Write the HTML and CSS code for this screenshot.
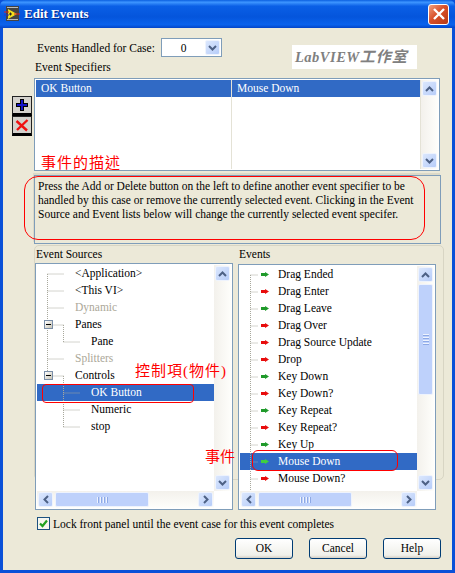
FILE: index.html
```html
<!DOCTYPE html>
<html lang="en">
<head>
  <meta charset="UTF-8">
  <title>Edit Events</title>
  <link rel="stylesheet" href="styles.css">
</head>
<body>
  <div class="window">
    <!-- title bar -->
    <div class="titlebar">
      <svg class="app-icon" width="16" height="16" viewBox="0 0 16 16">
        <rect x="2" y="0" width="13" height="15" fill="#444"/>
        <rect x="3" y="1" width="11" height="1" fill="#bbb" stroke="none"/>
        <rect x="3" y="13" width="11" height="1" fill="#bbb"/>
        <path d="M4 3 L13 8 L4 13 Z" fill="#f2e01c"/>
        <path d="M0 6 H5 M10 8 H16" stroke="#e02020"/>
        <path d="M0 9 H5" stroke="#2030d0"/>
        <path d="M5 8 H8 M6.500 6.500 V9.500" stroke="#222"/>
      </svg>
      <span class="title">Edit Events</span>
      <div class="close-btn">
        <svg width="14" height="14" viewBox="0 0 14 14"><path d="M2 2 L12 12 M12 2 L2 12" stroke="#fff" stroke-width="2.400"/></svg>
      </div>
    </div>

    <div class="client">
      <div class="case-row">
        <span class="case-label">Events Handled for Case:</span>
        <div class="combo">
          <span class="combo-value">0</span>
          <div class="sb-btn combo-btn"><svg width="9" height="6" viewBox="0 0 9 6"><path d="M1 1 L4.500 4.500 L8 1" fill="none" stroke="#4d6185" stroke-width="2"/></svg></div>
        </div>
      </div>

      <div class="spec-label">Event Specifiers</div>
      <div class="spec-row">
        <div class="side-btns">
          <div class="side-btn"><svg width="14" height="14" viewBox="0 0 14 14"><path d="M7 1 V13 M1 7 H13" stroke="#000" stroke-width="4"/><path d="M7 2 V12 M2 7 H12" stroke="#1414c8" stroke-width="2"/></svg></div>
          <div class="side-btn"><svg width="14" height="14" viewBox="0 0 14 14"><path d="M1.500 3 L12 12.500 M12.500 2 L2 12" stroke="#f01010" stroke-width="2.400"/></svg></div>
        </div>
        <div class="spec-list">
          <div class="spec-cols">
            <div class="spec-col first"><div class="spec-cell">OK Button</div></div>
            <div class="spec-col"><div class="spec-cell">Mouse Down</div></div>
          </div>
          <div class="vscroll">
            <div class="sb-btn"><svg width="9" height="6" viewBox="0 0 9 6"><path d="M1 5 L4.500 1.500 L8 5" fill="none" stroke="#4d6185" stroke-width="2"/></svg></div>
            <div class="sb-track"></div>
            <div class="sb-btn"><svg width="9" height="6" viewBox="0 0 9 6"><path d="M1 1 L4.500 4.500 L8 1" fill="none" stroke="#4d6185" stroke-width="2"/></svg></div>
          </div>
        </div>
      </div>

      <div class="desc">Press the Add or Delete button on the left to define another event specifier to be handled by this case or remove the currently selected event. Clicking in the Event Source and Event lists below will change the currently selected event specifer.</div>

      <div class="group">
        <!-- sources -->
        <div class="pane">
          <div class="pane-label">Event Sources</div>
          <div class="list">
            <div class="rows">
              <svg class="lines" width="180" height="226">
                <path d="M10.500 9 V111 M10.500 9 H27 M10.500 26 H27 M10.500 43 H27 M10.500 60 H27 M10.500 94 H27 M10.500 111 H27 M26.500 60 V77 M26.500 77 H43 M26.500 111 V162 M26.500 128 H43 M26.500 145 H43 M26.500 162 H43" fill="none" stroke="#a8a89c" stroke-dasharray="1 1"/>
              </svg>
              <div class="row lv1">&lt;Application&gt;</div>
              <div class="row lv1">&lt;This VI&gt;</div>
              <div class="row lv1 off">Dynamic</div>
              <div class="row lv1"><span class="minus"></span>Panes</div>
              <div class="row lv2">Pane</div>
              <div class="row lv1 off">Splitters</div>
              <div class="row lv1"><span class="minus"></span>Controls</div>
              <div class="row lv2 sel">OK Button</div>
              <div class="row lv2">Numeric</div>
              <div class="row lv2">stop</div>
            </div>
            <div class="vscroll">
              <div class="sb-btn"><svg width="9" height="6" viewBox="0 0 9 6"><path d="M1 5 L4.500 1.500 L8 5" fill="none" stroke="#4d6185" stroke-width="2"/></svg></div>
              <div class="sb-track"></div>
              <div class="sb-btn"><svg width="9" height="6" viewBox="0 0 9 6"><path d="M1 1 L4.500 4.500 L8 1" fill="none" stroke="#4d6185" stroke-width="2"/></svg></div>
            </div>
            <div class="hscroll">
              <div class="sb-btn"><svg width="6" height="9" viewBox="0 0 6 9"><path d="M5 1 L1.500 4.500 L5 8" fill="none" stroke="#4d6185" stroke-width="2"/></svg></div>
              <div class="sb-thumb h"><i></i><i></i><i></i><i></i></div>
              <div class="sb-track"></div>
              <div class="sb-btn"><svg width="6" height="9" viewBox="0 0 6 9"><path d="M1 1 L4.500 4.500 L1 8" fill="none" stroke="#4d6185" stroke-width="2"/></svg></div>
            </div>
          </div>
        </div>

        <!-- events -->
        <div class="pane">
          <div class="pane-label">Events</div>
          <div class="list events">
            <div class="rows">
              <svg class="lines" width="180" height="226">
                <path d="M10.500 9 V226 M10.500 9 H18 M10.500 26 H18 M10.500 43 H18 M10.500 60 H18 M10.500 77 H18 M10.500 94 H18 M10.500 111 H18 M10.500 128 H18 M10.500 145 H18 M10.500 162 H18 M10.500 179 H18 M10.500 196 H18 M10.500 213 H18" fill="none" stroke="#a8a89c" stroke-dasharray="1 1"/>
              </svg>
              <div class="row ev go">Drag Ended</div>
              <div class="row ev stop">Drag Enter</div>
              <div class="row ev go">Drag Leave</div>
              <div class="row ev stop">Drag Over</div>
              <div class="row ev stop">Drag Source Update</div>
              <div class="row ev stop">Drop</div>
              <div class="row ev go">Key Down</div>
              <div class="row ev stop">Key Down?</div>
              <div class="row ev go">Key Repeat</div>
              <div class="row ev stop">Key Repeat?</div>
              <div class="row ev go">Key Up</div>
              <div class="row ev go sel">Mouse Down</div>
              <div class="row ev stop">Mouse Down?</div>
              <div class="row ev go">Mouse Enter</div>
            </div>
            <div class="vscroll">
              <div class="sb-btn"><svg width="9" height="6" viewBox="0 0 9 6"><path d="M1 5 L4.500 1.500 L8 5" fill="none" stroke="#4d6185" stroke-width="2"/></svg></div>
              <div class="sb-thumb v"><i></i><i></i><i></i><i></i></div>
              <div class="sb-track"></div>
              <div class="sb-btn"><svg width="9" height="6" viewBox="0 0 9 6"><path d="M1 1 L4.500 4.500 L8 1" fill="none" stroke="#4d6185" stroke-width="2"/></svg></div>
            </div>
            <div class="hscroll">
              <div class="sb-btn"><svg width="6" height="9" viewBox="0 0 6 9"><path d="M5 1 L1.500 4.500 L5 8" fill="none" stroke="#4d6185" stroke-width="2"/></svg></div>
              <div class="sb-thumb h"><i></i><i></i><i></i><i></i></div>
              <div class="sb-track"></div>
              <div class="sb-btn"><svg width="6" height="9" viewBox="0 0 6 9"><path d="M1 1 L4.500 4.500 L1 8" fill="none" stroke="#4d6185" stroke-width="2"/></svg></div>
            </div>
          </div>
        </div>
      </div>

      <div class="lock-row">
        <div class="check"><svg width="11" height="11" viewBox="0 0 11 11"><path d="M2 5.500 L4.500 8 L9 2.500" fill="none" stroke="#21a121" stroke-width="2.200"/></svg></div>
        <span>Lock front panel until the event case for this event completes</span>
      </div>

      <div class="btn-row">
        <div class="btn">OK</div>
        <div class="btn">Cancel</div>
        <div class="btn">Help</div>
      </div>
    </div>

    <!-- red notes pasted on top of the screenshot -->
    <div class="logo">LabVIEW<span class="logo-cjk">工作室</span></div>
    <div class="note note-desc">事件的描述</div>
    <div class="note note-ctrl">控制項(物件)</div>
    <div class="note note-ev">事件</div>
    <div class="ring ring-desc"></div>
    <div class="ring ring-ctrl"></div>
    <div class="ring ring-ev"></div>
  </div>
</body>
</html>
```

FILE: styles.css
```css
* {
  margin: 0;
  padding: 0;
  box-sizing: border-box;
}

body {
  font-family: "Liberation Serif", "Noto Sans CJK TC", serif;
  font-size: 11.500px;
  color: #000;
  background: #fff;
  overflow: hidden;
}

.window {
  position: relative;
  width: 455px;
  height: 573px;
  display: flex;
  flex-direction: column;
  background: #0a50d8;
  overflow: hidden;
}

/* title bar */
.titlebar {
  height: 28px;
  flex: none;
  display: flex;
  align-items: center;
  padding: 0 6px 0 4px;
  background: linear-gradient(to bottom, #0a5fe0 0%, #3d95ff 8%, #0a5fe6 22%, #0455dc 60%, #0a62ec 88%, #0345c8 100%);
  border-radius: 6px 6px 0 0;
}

.app-icon {
  flex: none;
  margin-right: 4px;
}

.title {
  flex: 1;
  font-size: 13px;
  font-weight: bold;
  color: #fff;
  text-shadow: 1px 1px 0 #0a2f8c;
}

.close-btn {
  width: 21px;
  height: 21px;
  display: flex;
  align-items: center;
  justify-content: center;
  background: linear-gradient(135deg, #f0a080, #d8502a 45%, #b83a14);
  border: 1px solid #fff;
  border-radius: 3px;
}

.client {
  position: relative;
  flex: 1;
  margin: 0 3px 3px;
  padding-top: 10px;
  background: #ece9d8;
  display: flex;
  flex-direction: column;
}

/* case selector */
.case-row {
  height: 19px;
  display: flex;
  align-items: center;
  padding-left: 34px;
}

.case-label {
  width: 124px;
  white-space: nowrap;
}

.combo {
  width: 61px;
  height: 19px;
  display: flex;
  align-items: center;
  background: #fff;
  border: 1px solid #7f9db9;
  padding-right: 1px;
}

.combo-value {
  flex: 1;
  text-align: center;
}

.combo-btn {
  width: 15px;
  height: 15px;
}

/* specifier list */
.spec-label {
  margin: 3px 0 0 32px;
  height: 15px;
  line-height: 15px;
}

.spec-row {
  display: flex;
  padding-left: 9px;
  height: 93px;
  margin-top: 3px;
}

.side-btns {
  width: 22px;
  display: flex;
  flex-direction: column;
  margin-top: 18px;
}

.side-btn {
  width: 20px;
  height: 20px;
  display: flex;
  align-items: center;
  justify-content: center;
  background: #d4d2cc;
  border: 1px solid #222;
  border-bottom: 3px solid #000;
}

.spec-list {
  width: 406px;
  height: 93px;
  display: flex;
  background: #fff;
  border: 1px solid #7f9db9;
  padding: 1px;
}

.spec-cols {
  flex: 1;
  display: flex;
}

.spec-col {
  flex: 1;
  border-right: 1px solid #e4e2d6;
}

.spec-col.first {
  flex: none;
  width: 196px;
}

.spec-cell {
  height: 17px;
  line-height: 17px;
  padding-left: 5px;
  background: #316ac5;
  color: #fff;
}

/* scrollbars */
.vscroll {
  width: 17px;
  display: flex;
  flex-direction: column;
  background: linear-gradient(to right, #f3f1ec, #fefefb);
  padding: 1px;
}

.hscroll {
  height: 17px;
  display: flex;
  background: linear-gradient(to bottom, #f3f1ec, #fefefb);
  padding: 1px;
}

.sb-btn {
  flex: none;
  width: 15px;
  height: 15px;
  display: flex;
  align-items: center;
  justify-content: center;
  background: linear-gradient(135deg, #dbe7fd, #b7cdf9);
  border: 1px solid #eef3fd;
  border-radius: 2px;
}

.sb-track {
  flex: 1;
}

.sb-thumb {
  display: flex;
  align-items: center;
  justify-content: center;
  gap: 1px;
  background: #bed1fb;
  border: 1px solid #eef3fd;
  border-radius: 2px;
}

.sb-thumb.h {
  width: 94px;
  margin: 0 2px;
}

.sb-thumb.h i {
  width: 1px;
  height: 6px;
  background: #eef3fd;
  box-shadow: 1px 0 0 #8da9e6;
  margin-right: 1px;
}

.sb-thumb.v {
  height: 111px;
  margin: 2px 0;
  flex-direction: column;
}

.sb-thumb.v i {
  width: 6px;
  height: 1px;
  background: #eef3fd;
  box-shadow: 0 1px 0 #8da9e6;
  margin-bottom: 1px;
}

/* description */
.desc {
  width: 407px;
  height: 69px;
  margin: 4px 0 0 31px;
  padding: 3px 3px;
  line-height: 14px;
  border: 1px solid #7f9db9;
  box-shadow: -1px -2px 0 #dcd9c8;
}

/* lists */
.group {
  position: relative;
  display: flex;
  height: 266px;
  gap: 5px;
  margin-left: 32px;
  padding-top: 3px;
}

.group::before {
  content: "";
  position: absolute;
  top: 1px;
  left: -1px;
  width: 408px;
  height: 233px;
  border: 1px solid #d8d5c4;
  border-radius: 5px;
}

.pane {
  position: relative;
}

.pane-label {
  height: 16px;
  line-height: 15px;
  padding-left: 1px;
}

.list {
  width: 198px;
  height: 247px;
  display: grid;
  grid-template-columns: 1fr 17px;
  grid-template-rows: 1fr 17px;
  background: #fff;
  border: 1px solid #7f9db9;
  padding: 1px;
}

.list.events {
  height: 246px;
  margin-top: 1px;
}

.rows {
  position: relative;
  overflow: hidden;
}

.lines {
  position: absolute;
  top: 0;
  left: 0;
  z-index: 1;
}

.row {
  position: relative;
  height: 17px;
  line-height: 17px;
  white-space: nowrap;
}

.lv1 {
  padding-left: 38px;
}

.lv2 {
  padding-left: 54px;
}

.ev {
  padding-left: 38px;
}

.off {
  color: #aca899;
}

.sel {
  background: #316ac5;
  color: #fff;
}

.minus {
  position: absolute;
  top: 4px;
  left: 7px;
  z-index: 2;
  width: 9px;
  height: 9px;
  background: linear-gradient(135deg, #fff, #c8c4b4);
  border: 1px solid #7a8ea8;
}

.minus::after {
  content: "";
  position: absolute;
  top: 3px;
  left: 1px;
  width: 5px;
  height: 1px;
  background: #000;
}

/* event arrows */
.ev::before {
  content: "";
  position: absolute;
  top: 6px;
  left: 21px;
  width: 8px;
  height: 5px;
  clip-path: polygon(0 1px, 4px 1px, 4px 0, 8px 2.500px, 4px 5px, 4px 4px, 0 4px);
}

.ev.go::before {
  background: #1f9a2a;
}

.ev.go.sel::before {
  background: #3fd03f;
}

.ev.stop::before {
  background: #e80c0c;
}

/* bottom */
.lock-row {
  display: flex;
  align-items: center;
  gap: 3px;
  margin: 6px 0 0 34px;
  height: 15px;
}

.check {
  width: 13px;
  height: 13px;
  display: flex;
  align-items: center;
  justify-content: center;
  background: #f6f6f0;
  border: 1px solid #1c5180;
}

.btn-row {
  display: flex;
  justify-content: flex-end;
  gap: 16px;
  margin-top: 7px;
  padding-right: 11px;
}

.btn {
  width: 58px;
  height: 21px;
  line-height: 19px;
  text-align: center;
  background: linear-gradient(to bottom, #fff, #f0f0ea 85%, #d6d0c5);
  border: 1px solid #003c74;
  border-radius: 3px;
}

/* pasted notes */
.logo {
  position: absolute;
  top: 45px;
  left: 292px;
  width: 125px;
  height: 24px;
  line-height: 24px;
  padding-left: 3px;
  background: #fff;
  color: #808080;
  font-size: 14.500px;
  font-weight: bold;
  font-style: italic;
  letter-spacing: 0.500px;
  white-space: nowrap;
}

.logo-cjk {
  font-size: 15px;
  letter-spacing: 1px;
}

.note {
  position: absolute;
  color: #f00;
  font-size: 15px;
  line-height: 16px;
  letter-spacing: 1px;
  white-space: nowrap;
}

.note-desc {
  top: 155px;
  left: 41px;
}

.note-ctrl {
  top: 363px;
  left: 135px;
}

.note-ev {
  top: 449px;
  left: 205px;
  letter-spacing: 0;
}

.ring {
  position: absolute;
  z-index: 3;
  border: 1px solid #f00;
}

.ring-desc {
  top: 176px;
  left: 24px;
  width: 401px;
  height: 64px;
  border-radius: 14px;
}

.ring-ctrl {
  top: 384px;
  left: 42px;
  width: 152px;
  height: 19px;
  border-radius: 4px;
}

.ring-ev {
  top: 450px;
  left: 252px;
  width: 146px;
  height: 21px;
  border-radius: 6px;
}
```
